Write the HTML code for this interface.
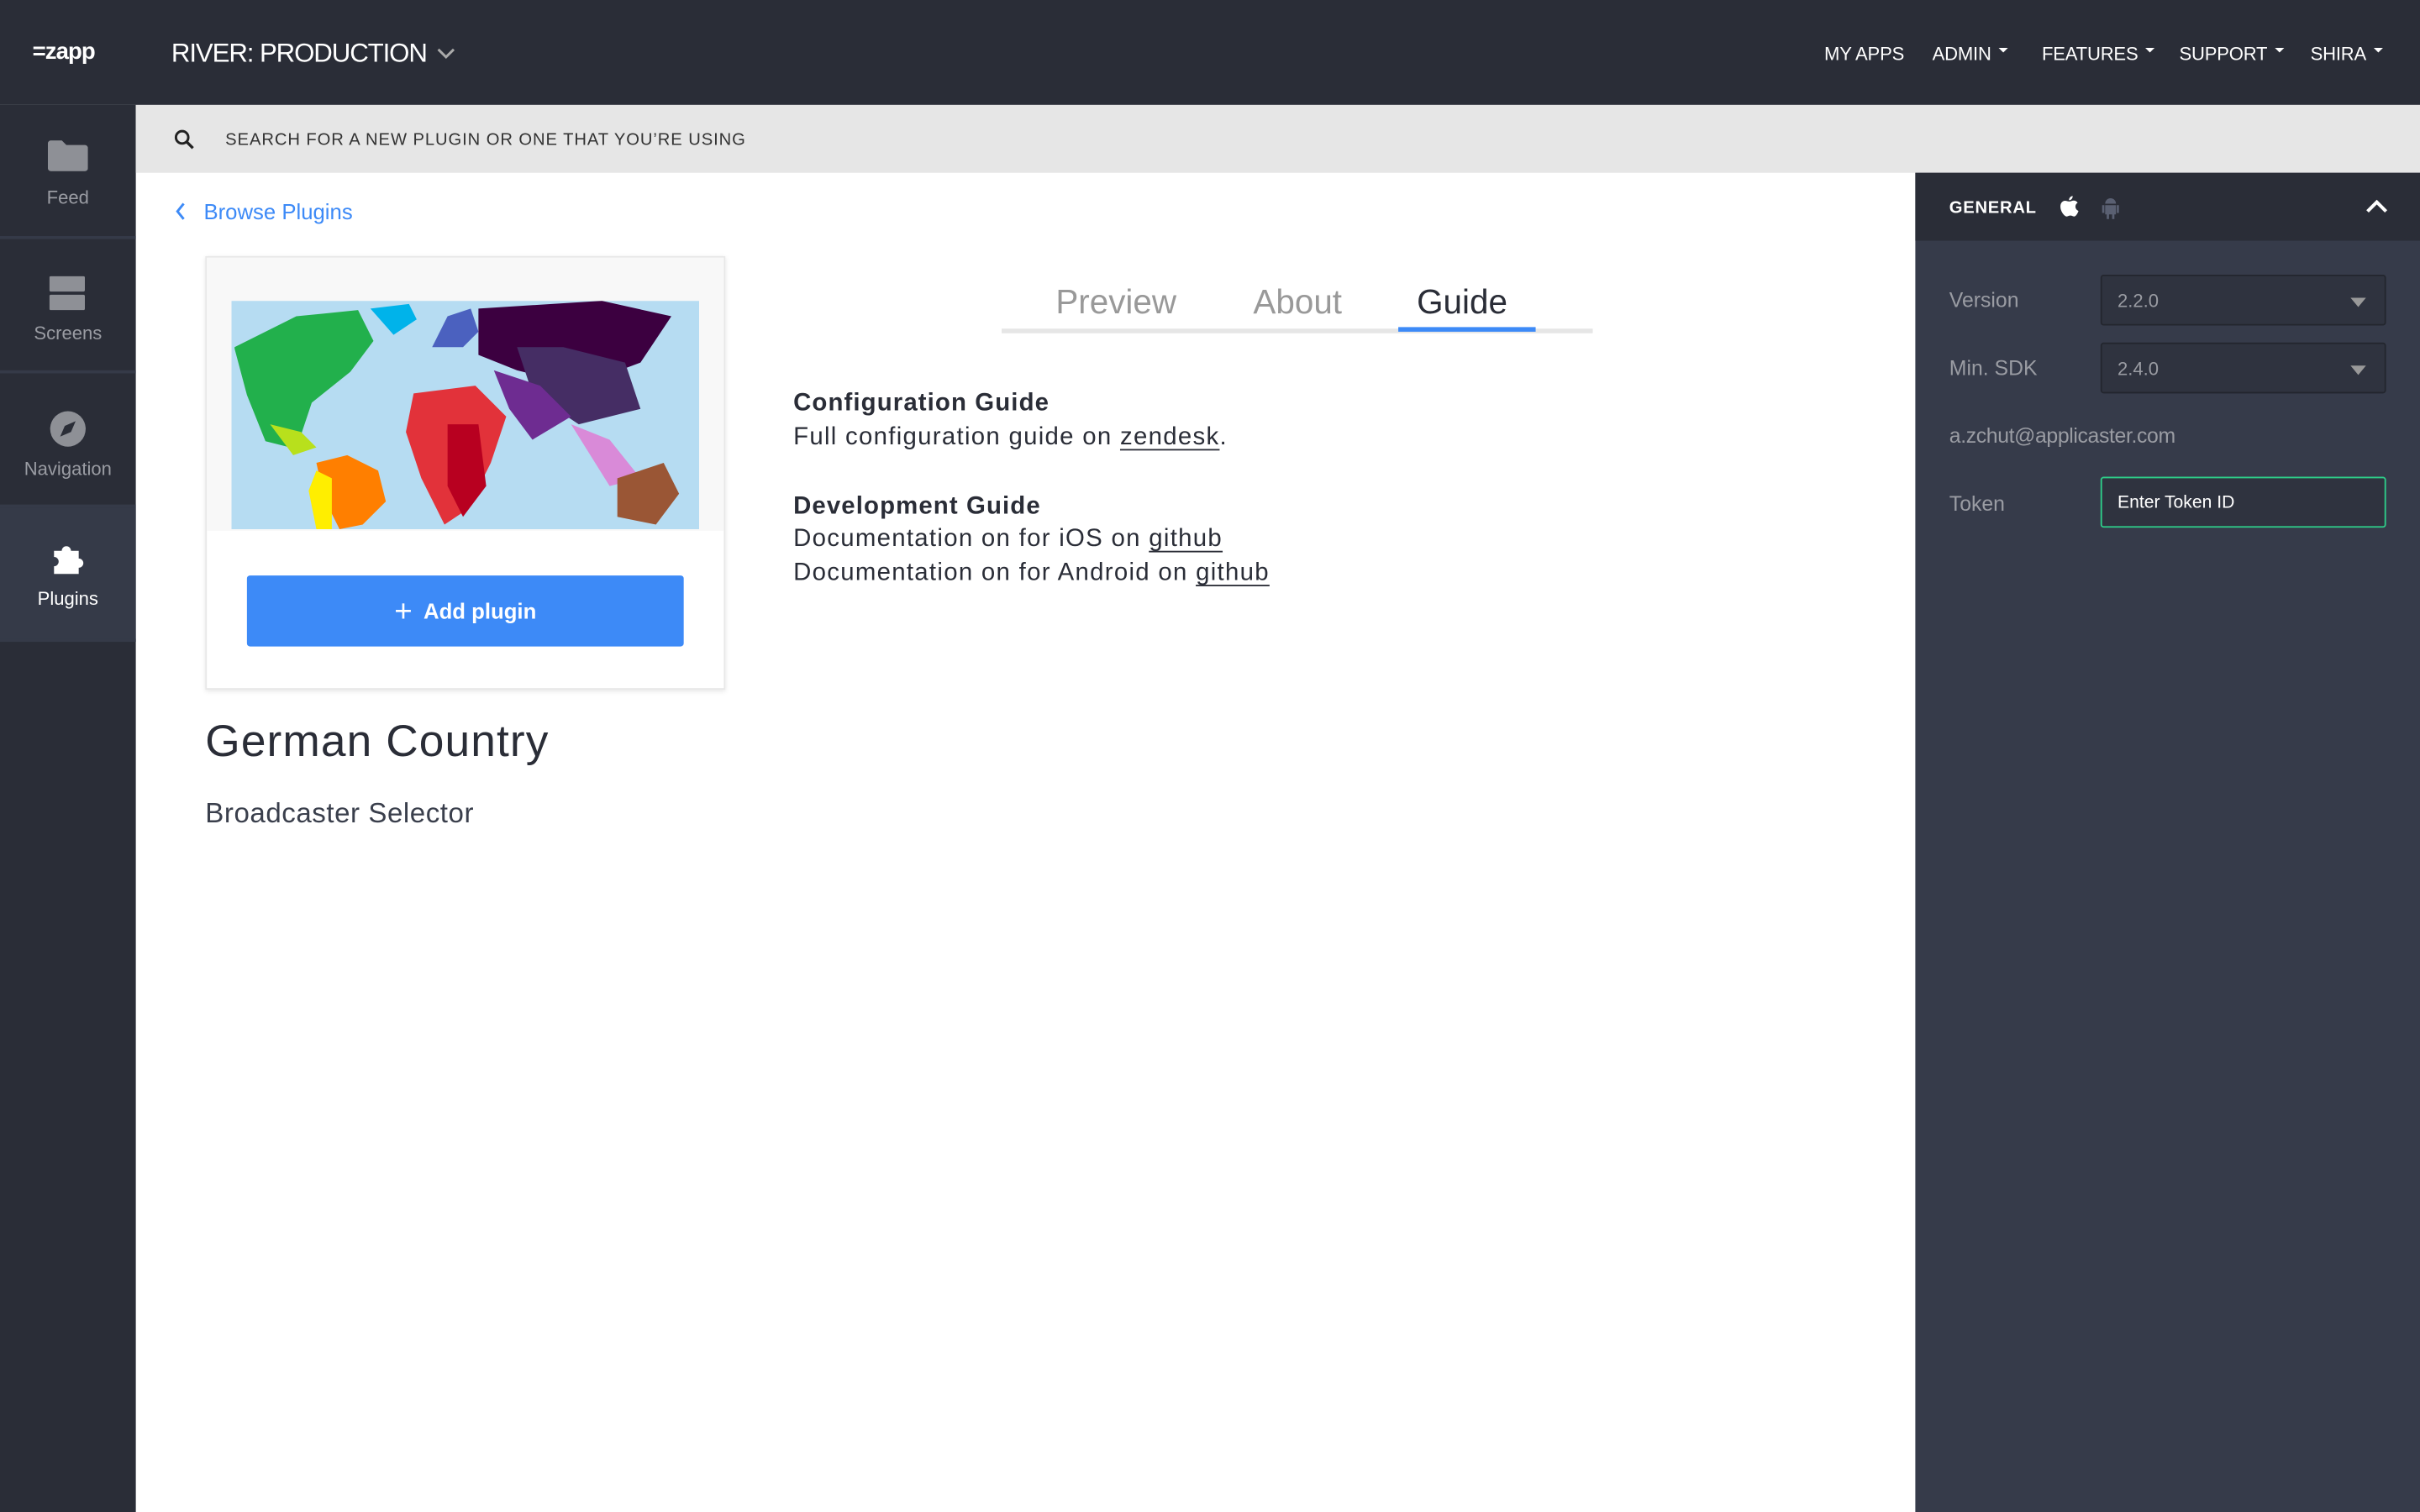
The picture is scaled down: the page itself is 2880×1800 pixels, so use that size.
<!DOCTYPE html>
<html><head><meta charset="utf-8"><style>
*{margin:0;padding:0;box-sizing:border-box}
html,body{width:2880px;height:1800px;overflow:hidden;background:#fff}
#w{width:1568px;height:980px;transform:scale(1.836735);transform-origin:0 0;position:relative;font-family:"Liberation Sans",sans-serif}
.a{position:absolute}
.top{left:0;top:0;width:1568px;height:68px;background:#2a2d37}
.side{left:0;top:68px;width:88px;height:912px;background:#2a2d37}
.it{position:absolute;left:0;width:88px;height:87px;border-bottom:2px solid #353a48;color:#9a9ca3;font-size:12px;text-align:center}
.it span{position:absolute;left:0;right:0}
.nav{top:28px;font-size:12px;color:#fff;letter-spacing:-0.1px}
.nav i{display:inline-block;margin-left:5px;border:3px solid transparent;border-top:3.5px solid #fff;vertical-align:2px}
.tab{font-size:22px;color:#999;top:181px}
.g{font-size:16px;color:#2a2d37;letter-spacing:0.7px;line-height:22px}
.g b{font-weight:bold;letter-spacing:.6px}
.g u{text-decoration-thickness:1px;text-underline-offset:3px}
.lbl{left:22px;font-size:13.5px;color:#9a9ca3}
.sel{left:120px;width:185px;height:33px;background:#2f333f;border:1px solid #23262e;border-radius:2px;color:#9a9ca3;font-size:12px;padding:9px 10px}
.sel:after{content:"";position:absolute;right:12px;top:14px;border:5px solid transparent;border-top:6px solid #999}
</style></head><body><div id="w">
<div class="a top"></div>
<div class="a" style="left:21px;top:25px;color:#fff;font-size:15px;font-weight:bold;letter-spacing:-0.5px">=zapp</div>
<div class="a" style="left:111px;top:25px;color:#fff;font-size:17px;letter-spacing:-0.6px">RIVER: PRODUCTION</div>
<svg class="a" style="left:283px;top:31px" width="12" height="8"><path d="M1 1l5 5 5-5" stroke="#aaa" stroke-width="1.6" fill="none"/></svg>
<div class="a nav" style="left:1182px">MY APPS</div>
<div class="a nav" style="left:1252px">ADMIN<i></i></div>
<div class="a nav" style="left:1323px">FEATURES<i></i></div>
<div class="a nav" style="left:1412px">SUPPORT<i></i></div>
<div class="a nav" style="left:1497px">SHIRA<i></i></div>
<div class="a side">
 <div class="it" style="top:0"><svg class="a" style="left:31px;top:23px" width="26" height="20"><path d="M0 2a2 2 0 0 1 2-2h7l3 3h12a2 2 0 0 1 2 2v13a2 2 0 0 1-2 2H2a2 2 0 0 1-2-2z" fill="#8e9096"/></svg><span style="top:53px">Feed</span></div>
 <div class="it" style="top:87px"><svg class="a" style="left:32px;top:24px" width="23" height="23"><rect width="23" height="10" rx="1" fill="#8e9096"/><rect y="12" width="23" height="10" rx="1" fill="#8e9096"/></svg><span style="top:54px">Screens</span></div>
 <div class="it" style="top:174px"><svg class="a" style="left:32px;top:24px" width="24" height="24"><circle cx="12" cy="12" r="11.5" fill="#8e9096"/><path d="M17 7l-3 7-7 3 3-7z" fill="#2a2d37"/></svg><span style="top:55px">Navigation</span></div>
 <div class="it" style="top:261px;background:#353a48;color:#fff"><svg class="a" style="left:33px;top:22px" width="22" height="22"><path d="M2 6h5a3 3 0 1 1 6 0h5v5a3 3 0 1 1 0 6v4H2v-5a3 3 0 1 0 0-6z" fill="#fff"/></svg><span style="top:52px">Plugins</span></div>
</div>
<div class="a" style="left:88px;top:68px;width:1480px;height:44px;background:#e6e6e6"></div>
<svg class="a" style="left:113px;top:84px" width="13" height="13"><circle cx="5" cy="5" r="4" stroke="#222" stroke-width="1.6" fill="none"/><path d="M8 8l4 4" stroke="#222" stroke-width="1.8"/></svg>
<div class="a" style="left:146px;top:85px;font-size:11px;color:#333;letter-spacing:.5px">SEARCH FOR A NEW PLUGIN OR ONE THAT YOU’RE USING</div>
<svg class="a" style="left:113px;top:131px" width="8" height="12"><path d="M6 1L2 6l4 5" stroke="#3d8af7" stroke-width="1.6" fill="none"/></svg>
<div class="a" style="left:132px;top:129px;font-size:14px;color:#3d8af7">Browse Plugins</div>
<div class="a" style="left:133px;top:166px;width:337px;height:281px;background:#fff;border:1px solid #e8e8e8;box-shadow:0 1px 3px rgba(0,0,0,.1)">
 <div style="height:177px;background:#f8f8f8"></div>
</div>
<svg class="a" style="left:150px;top:195px" width="303" height="148" viewBox="0 0 303 148">
<rect width="303" height="148" fill="#b6dcf2"/>
<path d="M2 30l40-20 40-4 10 20-15 20-25 20-10 30-20-5-12-30-8-30z" fill="#22b04c"/>
<path d="M25 80l20 5 10 10-15 5z" fill="#b8e01c"/>
<path d="M55 105l20-5 20 10 5 20-15 15-15 3-10-20z" fill="#ff7f00"/>
<path d="M55 110l10 5 0 33-10 0-5-25z" fill="#ffee00"/>
<path d="M90 5l25-3 5 10-15 10z" fill="#00b3ea"/>
<path d="M140 10l15-5 5 15-10 10-20 0z" fill="#4b61bf"/>
<path d="M160 5l80-5 45 10-20 30-40 15-40-10-25-10z" fill="#3c0040"/>
<path d="M185 30l30 0 40 10 10 30-40 10-30-20z" fill="#452d64"/>
<path d="M170 45l30 10 20 20-25 15-15-20z" fill="#6e2c91"/>
<path d="M118 60l40-5 20 20-10 30-15 30-15 10-15-30-10-30z" fill="#e2323a"/>
<path d="M140 80l20 0 5 40-15 20-10-20z" fill="#b80020"/>
<path d="M220 80l25 10 20 25-20 5z" fill="#d98ad8"/>
<path d="M250 115l30-10 10 20-15 20-25-5z" fill="#9a5635"/>
</svg>
<div class="a" style="left:160px;top:373px;width:283px;height:46px;background:#3d8af7;border-radius:2px;color:#fff;font-weight:bold;font-size:14px;text-align:center;line-height:46px"><span style="font-size:20px;font-weight:normal;vertical-align:-2px">+</span>&nbsp; Add plugin</div>
<div class="a" style="left:133px;top:465px;font-size:29px;color:#2a2d37;letter-spacing:.6px">German Country</div>
<div class="a" style="left:133px;top:517px;font-size:18px;color:#3a3f4c;letter-spacing:.3px">Broadcaster Selector</div>
<div class="a tab" style="left:684px;top:183px">Preview</div>
<div class="a tab" style="left:812px;top:183px">About</div>
<div class="a tab" style="left:918px;top:183px;color:#2a2d37">Guide</div>
<div class="a" style="left:649px;top:213px;width:383px;height:3px;background:#e6e6e6"></div>
<div class="a" style="left:906px;top:212px;width:89px;height:3px;background:#3d8af7"></div>
<div class="a g" style="left:514px;top:251px"><b>Configuration Guide</b><br>Full configuration guide on <u>zendesk</u>.<br><br><b style="position:relative;top:1px">Development Guide</b><br>Documentation on for iOS on <u>github</u><br>Documentation on for Android on <u>github</u></div>
<div class="a" style="left:1241px;top:112px;width:327px;height:868px;background:#363b4a">
 <div class="a" style="left:0;top:0;width:327px;height:44px;background:#2a2d37"></div>
 <div class="a" style="left:22px;top:17px;font-size:11px;font-weight:bold;color:#fff;letter-spacing:.4px">GENERAL</div>
 <svg class="a" style="left:94px;top:15px" width="12" height="14" viewBox="0 0 12 14"><path d="M8 0c0 1.5-1 2.8-2.4 2.8C5.5 1.3 6.6.2 8 0zM6 3.6c.8 0 1.7-.6 2.6-.6 1 0 2 .5 2.6 1.4-2.2 1.3-1.8 4.4.5 5.3-.5 1.5-1.6 3.6-2.8 3.6-.9 0-1.2-.6-2.4-.6s-1.6.6-2.5.6C2.6 13.3 0 10 0 6.8 0 4.6 1.4 3.1 3 3.1c1 0 2 .5 3 .5z" fill="#fff"/></svg>
 <svg class="a" style="left:121px;top:16px" width="11" height="14"><path d="M2 4a3.5 3.5 0 0 1 7 0zM2 5h7v6H2zM0 5h1.5v5H0zM9.5 5H11v5H9.5zM3 11h1.5v3H3zM6.5 11H8v3H6.5z" fill="#5a6072"/></svg>
 <svg class="a" style="left:292px;top:17px" width="14" height="10"><path d="M1 8l6-6 6 6" stroke="#fff" stroke-width="2.2" fill="none"/></svg>
 <div class="a lbl" style="top:75px">Version</div><div class="a sel" style="top:66px">2.2.0</div>
 <div class="a lbl" style="top:119px">Min. SDK</div><div class="a sel" style="top:110px">2.4.0</div>
 <div class="a lbl" style="top:163px;letter-spacing:-0.2px">a.zchut@applicaster.com</div>
 <div class="a lbl" style="top:207px">Token</div>
 <div class="a" style="left:120px;top:197px;width:185px;height:33px;background:#2f333f;border:1.5px solid #2ecf8a;border-radius:2px;color:#fff;font-size:11.5px;padding:10px 10px">Enter Token ID</div>
</div>
</div></body></html>
